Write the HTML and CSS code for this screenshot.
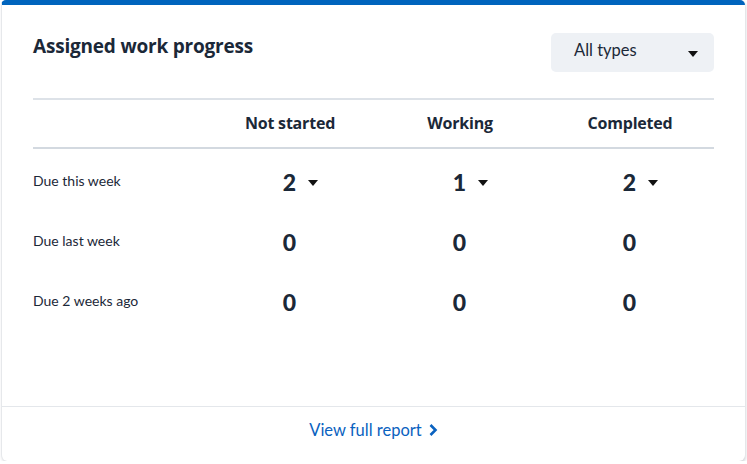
FILE: index.html
```html
<!DOCTYPE html>
<html lang="en">
<head>
  <meta charset="UTF-8" />
  <meta name="viewport" content="width=device-width, initial-scale=1.0" />
  <title>Assigned work progress</title>
  <link rel="stylesheet" href="styles.css">
</head>
<body>
  <div class="card">
    <div class="card-body">
      <div class="card-head">
        <h2 class="title">Assigned work progress</h2>
        <button class="select">
          <span>All types</span>
          <span class="caret"></span>
        </button>
      </div>

      <div class="grid">
        <div class="grid-head">
          <div></div>
          <div>Not started</div>
          <div>Working</div>
          <div>Completed</div>
        </div>

        <div class="grid-rows">
          <div class="grid-row">
            <div class="label">Due this week</div>
            <div class="count"><span class="num has-menu">2</span></div>
            <div class="count"><span class="num has-menu">1</span></div>
            <div class="count"><span class="num has-menu">2</span></div>
          </div>
          <div class="grid-row">
            <div class="label">Due last week</div>
            <div class="count"><span class="num">0</span></div>
            <div class="count"><span class="num">0</span></div>
            <div class="count"><span class="num">0</span></div>
          </div>
          <div class="grid-row">
            <div class="label">Due 2 weeks ago</div>
            <div class="count"><span class="num">0</span></div>
            <div class="count"><span class="num">0</span></div>
            <div class="count"><span class="num">0</span></div>
          </div>
        </div>
      </div>
    </div>

    <div class="card-foot">
      <a class="report-link" href="#">View full report
        <svg width="10" height="14" viewBox="0 0 10 14"><path d="M2.5 2 L7.5 7 L2.5 12" fill="none" stroke="currentColor" stroke-width="2.6"/></svg>
      </a>
    </div>
  </div>
</body>
</html>
```

FILE: styles.css
```css
body {
  margin: 0;
  padding: 0 2px 0 1px;
  font-family: 'Lato', 'Open Sans', sans-serif;
  background: #fff;
  color: #1b2838;
}

.card {
  height: 456px;
  display: flex;
  flex-direction: column;
  background: #fff;
  border-top: 5px solid #0064bd;
  border-left: 1px solid #e6e8eb;
  border-radius: 5px 5px 6px 6px;
  box-shadow: 1px 2px 3px rgba(30, 40, 60, 0.18);
}

.card-body {
  flex: 1;
  padding: 28px 31px 0 31px;
}

.card-head {
  display: flex;
  justify-content: space-between;
  align-items: flex-start;
}

.title {
  margin: 0;
  font-family: 'Open Sans', sans-serif;
  font-size: 19px;
  font-weight: 700;
  line-height: 26px;
  letter-spacing: -0.2px;
}

.select {
  width: 163px;
  height: 39px;
  padding: 0 16px 0 23px;
  display: flex;
  align-items: center;
  justify-content: space-between;
  background: #eef1f5;
  border: none;
  border-radius: 5px;
  font-family: inherit;
  font-size: 16.5px;
  color: #1b2838;
}

.select span:first-child {
  margin-top: -6px;
}

.caret {
  width: 0;
  height: 0;
  border-left: 5.5px solid transparent;
  border-right: 5.5px solid transparent;
  border-top: 6px solid #111;
  margin-top: 2px;
}

.grid {
  margin-top: 26px;
  border-top: 2px solid #dde2e8;
}

.grid-head,
.grid-row {
  display: grid;
  grid-template-columns: 172px repeat(3, 170px);
  align-items: center;
}

.grid-head {
  height: 47px;
  border-bottom: 2px solid #d3d9e0;
  font-family: 'Open Sans', sans-serif;
  font-size: 16px;
  font-weight: 700;
  letter-spacing: -0.2px;
  text-align: center;
}

.grid-head div {
  margin-top: -2px;
}

.grid-rows {
  padding-top: 3px;
}

.grid-row {
  height: 60px;
}

.label {
  font-size: 14px;
  margin-top: -3px;
}

.count {
  text-align: center;
  padding-right: 1px;
}

.num {
  position: relative;
  font-size: 23px;
  font-weight: 900;
}

.num.has-menu::after {
  content: '';
  position: absolute;
  left: calc(100% + 12px);
  top: 12px;
  border-left: 5.5px solid transparent;
  border-right: 5.5px solid transparent;
  border-top: 6px solid #111;
}

.card-foot {
  height: 55px;
  border-top: 1px solid #e4e7eb;
  display: flex;
  align-items: center;
  justify-content: center;
  padding-bottom: 8px;
  box-sizing: border-box;
}

.report-link {
  display: flex;
  align-items: center;
  gap: 6px;
  color: #0a62c0;
  text-decoration: none;
  font-size: 16.5px;
}
```
